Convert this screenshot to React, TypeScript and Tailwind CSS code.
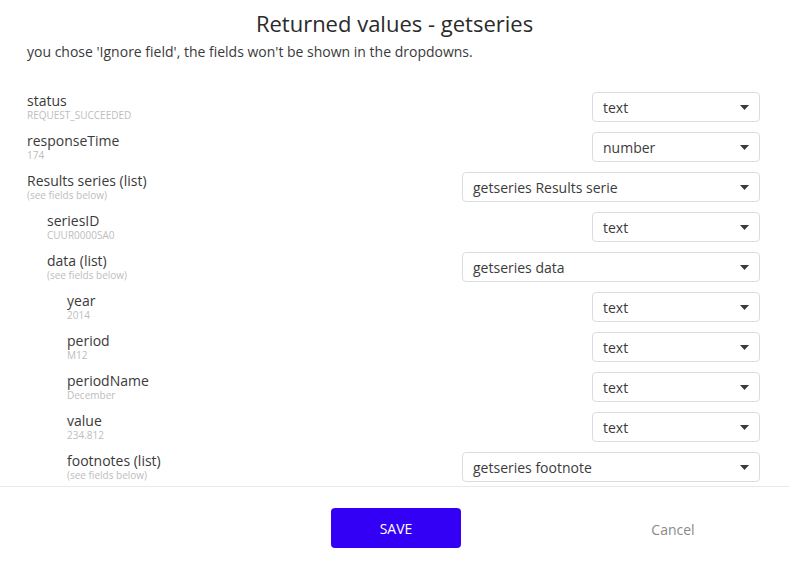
import React from 'react';

interface Field {
  name: string;
  sample: string;
  depth: number;
  value: string;
  wide?: boolean;
}

const fields: Field[] = [
  { name: 'status', sample: 'REQUEST_SUCCEEDED', depth: 0, value: 'text' },
  { name: 'responseTime', sample: '174', depth: 0, value: 'number' },
  { name: 'Results series (list)', sample: '(see fields below)', depth: 0, value: 'getseries Results serie', wide: true },
  { name: 'seriesID', sample: 'CUUR0000SA0', depth: 1, value: 'text' },
  { name: 'data (list)', sample: '(see fields below)', depth: 1, value: 'getseries data', wide: true },
  { name: 'year', sample: '2014', depth: 2, value: 'text' },
  { name: 'period', sample: 'M12', depth: 2, value: 'text' },
  { name: 'periodName', sample: 'December', depth: 2, value: 'text' },
  { name: 'value', sample: '234.812', depth: 2, value: 'text' },
  { name: 'footnotes (list)', sample: '(see fields below)', depth: 2, value: 'getseries footnote', wide: true },
];

const indent = ['pl-0', 'pl-5', 'pl-10'];

const Select = ({ value, wide }: { value: string; wide?: boolean }) => (
  <div
    className={`${wide ? 'w-[298px]' : 'w-[168px]'} h-[30px] flex items-center justify-between pl-[10px] pr-[10px] border border-[#dcdcdc] rounded-[4px] bg-white text-[14px] text-[#3b3b3b]`}
  >
    <span>{value}</span>
    <svg width="9" height="5" viewBox="0 0 9 5">
      <path d="M0 0 L9 0 L4.5 5 Z" fill="#3a3a3a" />
    </svg>
  </div>
);

export default function App() {
  return (
    <div className="w-[789px] h-[563px] bg-white flex flex-col font-['Open_Sans',sans-serif] overflow-hidden">
      {/* Header */}
      <div className="pt-[8px] px-[27px]">
        <h1 className="text-center text-[22px] leading-[30px] text-[#2b2b2b]">Returned values - getseries</h1>
        <p className="mt-[4px] text-[14px] leading-[19px] text-[#3a3a3a]">
          you chose 'Ignore field', the fields won't be shown in the dropdowns.
        </p>
      </div>

      {/* Field list */}
      <div className="mt-[31px] h-[395px] overflow-hidden border-b border-[#e8e8e8]">
        <div className="flex flex-col gap-[10px] pl-[27px] pr-[29px]">
          {fields.map((f, i) => (
            <div key={i} className="flex items-start justify-between h-[30px]">
              <div className={`${indent[f.depth]} flex flex-col`}>
                <span className="text-[14px] leading-[17px] text-[#3a3a3a] whitespace-nowrap">{f.name}</span>
                <span className="mt-[1px] text-[10px] leading-[11px] text-[#bdbdbd] whitespace-nowrap">{f.sample}</span>
              </div>
              <Select value={f.value} wide={f.wide} />
            </div>
          ))}
        </div>
      </div>

      {/* Footer */}
      <div className="flex items-center pl-[331px] pt-[21px]">
        <button className="w-[130px] h-[40px] rounded-[4px] bg-[#3300f5] text-white text-[14px]">SAVE</button>
        <button className="ml-[147px] w-[130px] h-[40px] pt-[2px] text-[14px] text-[#8a8a8a]">Cancel</button>
      </div>
    </div>
  );
}
